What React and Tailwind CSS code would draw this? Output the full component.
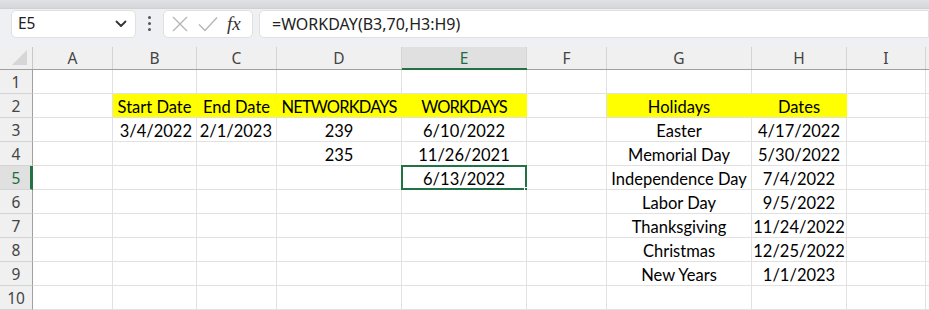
import React from "react";

const COLS = [
  { k: "A", w: 80 },
  { k: "B", w: 84 },
  { k: "C", w: 80 },
  { k: "D", w: 125 },
  { k: "E", w: 125 },
  { k: "F", w: 80 },
  { k: "G", w: 145 },
  { k: "H", w: 95 },
  { k: "I", w: 79 },
  { k: "J", w: 40 },
];

const YELLOW = new Set(["B2", "C2", "D2", "E2", "G2", "H2"]);

const DATA = {
  B2: ["Start Date", "c"],
  C2: ["End Date", "c"],
  D2: ["NETWORKDAYS", "c", "u"],
  E2: ["WORKDAYS", "c", "u"],
  G2: ["Holidays", "c"],
  H2: ["Dates", "c"],
  B3: ["3/4/2022", "r"],
  C3: ["2/1/2023", "r"],
  D3: ["239", "c"],
  E3: ["6/10/2022", "c"],
  D4: ["235", "c"],
  E4: ["11/26/2021", "c"],
  E5: ["6/13/2022", "c"],
  G3: ["Easter", "c"],
  H3: ["4/17/2022", "c"],
  G4: ["Memorial Day", "c"],
  H4: ["5/30/2022", "c"],
  G5: ["Independence Day", "c"],
  H5: ["7/4/2022", "c"],
  G6: ["Labor Day", "c"],
  H6: ["9/5/2022", "c"],
  G7: ["Thanksgiving", "c"],
  H7: ["11/24/2022", "c"],
  G8: ["Christmas", "c"],
  H8: ["12/25/2022", "c"],
  G9: ["New Years", "c"],
  H9: ["1/1/2023", "c"],
};

const cellFont = { fontFamily: "Lato, 'Liberation Sans', sans-serif" };
const uiFont = { fontFamily: "'Noto Sans', 'Open Sans', sans-serif" };

function Cell({ col, row }) {
  const id = col.k + row;
  const d = DATA[id];
  const yellow = YELLOW.has(id);
  const selected = id === "E5";
  return (
    <div
      className={`relative h-[24px] shrink-0 border-b border-r border-[#e1e1e1] flex items-center pt-[3px] text-[16.5px] text-black ${
        yellow ? "bg-[#ffff00] border-r-[#ffff00]" : "bg-white"
      } ${d && d[1] === "r" ? "justify-end pr-[4px]" : "justify-center"}`}
      style={{ width: col.w, ...cellFont }}
    >
      {d ? (
        <span className={`whitespace-nowrap leading-none ${d[2] === "u" ? "tracking-[-0.85px]" : ""}`}>{d[0]}</span>
      ) : null}
      {selected && (
        <>
          <div className="absolute left-[-1px] top-[-1px] right-[-1px] bottom-[-1px] border-2 border-[#217346] pointer-events-none" />
          <div className="absolute right-[-4px] bottom-[-4px] w-[6px] h-[6px] bg-[#217346] border border-white" />
        </>
      )}
    </div>
  );
}

export default function App() {
  const rows = [1, 2, 3, 4, 5, 6, 7, 8, 9, 10];
  return (
    <div className="w-[929px] h-[310px] overflow-hidden bg-[#eef0f3] select-none">
      {/* top strip */}
      <div className="h-[9px] bg-gradient-to-b from-[#e0e1e4] to-[#d6d7db] border-b border-[#d0d0d0]" />
      {/* formula bar */}
      <div className="h-[29px] flex items-center">
        <div
          className="ml-[11px] w-[125px] h-[28px] bg-white border border-[#e0e0e0] rounded-[5px] flex items-center justify-between pl-[6px] pr-[8px]"
          style={uiFont}
        >
          <span className="text-[15.5px] text-[#222]">E5</span>
          <svg width="12" height="8" viewBox="0 0 12 8">
            <path d="M1.5 1.5 L6 6 L10.5 1.5" fill="none" stroke="#333" strokeWidth="1.8" strokeLinecap="round" strokeLinejoin="round" />
          </svg>
        </div>
        <div className="w-[27px] flex flex-col items-center justify-center gap-[3px]">
          <div className="w-[3px] h-[3px] bg-[#555] rounded-full" />
          <div className="w-[3px] h-[3px] bg-[#555] rounded-full" />
          <div className="w-[3px] h-[3px] bg-[#555] rounded-full" />
        </div>
        <div className="w-[90px] h-[28px] bg-white border border-[#e0e0e0] rounded-[5px] flex items-center pl-[6px]">
          <svg width="18" height="18" viewBox="0 0 18 18" className="ml-[1px]">
            <path d="M2 2 L16 16 M16 2 L2 16" stroke="#b4b4b4" strokeWidth="1.3" />
          </svg>
          <svg width="22" height="18" viewBox="0 0 22 18" className="ml-[8px]">
            <path d="M2 9.5 L8 15.5 L20 2.5" fill="none" stroke="#b4b4b4" strokeWidth="1.3" />
          </svg>
          <span
            className="ml-[8px] text-[19px] italic text-[#333] leading-none"
            style={{ fontFamily: "'Liberation Serif', serif" }}
          >
            fx
          </span>
        </div>
        <div
          className="ml-[6px] flex-1 h-[28px] bg-white border border-[#e0e0e0] rounded-l-[5px] flex items-center pl-[12px] text-[16px] text-[#222]"
          style={uiFont}
        >
          =WORKDAY(B3,70,H3:H9)
        </div>
      </div>
      {/* gap */}
      <div className="h-[9px]" />
      {/* column headers */}
      <div className="flex h-[23px] bg-[#f0f0f0] border-b border-[#a0a0a0]">
        <div className="w-[33px] shrink-0 border-r border-[#c8c8c8] relative">
          <svg width="20" height="20" viewBox="0 0 20 20" className="absolute right-[3px] bottom-[2px]">
            <path d="M18 3 L18 18 L3 18 Z" fill="#d6d6d6" />
          </svg>
        </div>
        {COLS.map((c) => (
          <div
            key={c.k}
            className={`shrink-0 flex items-center justify-center pt-[2px] text-[15.5px] border-r border-[#d4d4d4] relative ${
              c.k === "E" ? "bg-[#e0e0e0] text-[#1e6c41]" : "text-[#444]"
            }`}
            style={{ width: c.w, ...uiFont }}
          >
            {c.k === "J" ? "" : c.k}
            {c.k === "E" && <div className="absolute left-0 right-[-1px] bottom-[-2px] h-[3px] bg-[#217346]" />}
          </div>
        ))}
      </div>
      {/* rows */}
      {rows.map((r) => (
        <div key={r} className="flex">
          <div
            className={`w-[33px] h-[24px] shrink-0 flex items-center justify-center pt-[3px] text-[15.5px] border-b border-[#d4d4d4] ${
              r === 5
                ? "bg-[#e0e0e0] text-[#1e6c41] border-r-[3px] border-r-[#217346] pl-[2px]"
                : "bg-[#f0f0f0] text-[#444] border-r border-r-[#a0a0a0]"
            }`}
            style={uiFont}
          >
            {r}
          </div>
          {COLS.map((c) => (
            <Cell key={c.k} col={c} row={r} />
          ))}
        </div>
      ))}
    </div>
  );
}
